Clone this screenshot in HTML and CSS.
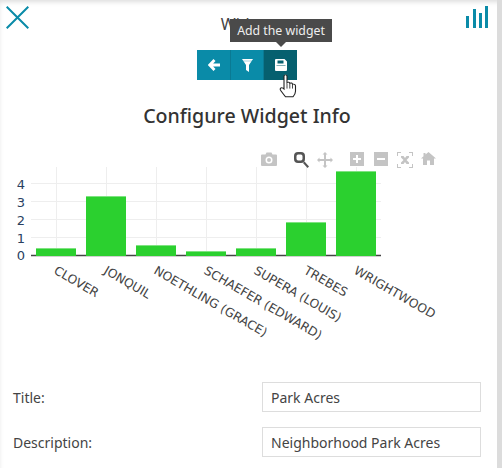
FILE: index.html
```html
<!DOCTYPE html>
<html lang="en">
<head>
  <meta charset="UTF-8">
  <title>Configure Widget</title>
  <link rel="stylesheet" href="styles.css">
</head>
<body>
  <div class="panel">
    <header class="top">
      <svg class="close-icon" width="23" height="23" viewBox="0 0 23 23"><path d="M.7 .7L22.300 22.300M22.300 .7L.7 22.300" stroke="#0a8ba8" stroke-width="2" fill="none"/></svg>
      <div class="widget-title">Widget</div>
      <svg class="bars-icon" width="22" height="22" viewBox="0 0 22 22">
        <rect x="0" y="10" width="3" height="12" fill="#0a8ba8"/>
        <rect x="7" y="3" width="3" height="19" fill="#0a8ba8"/>
        <rect x="13" y="7" width="3" height="15" fill="#0a8ba8"/>
        <rect x="19" y="0" width="3" height="22" fill="#0a8ba8"/>
      </svg>
    </header>

    <div class="btn-wrap">
      <div class="tooltip">Add the widget</div>
      <div class="btn-group">
        <button class="btn">
          <svg class="back-icon" width="12" height="12" viewBox="0 0 12 12"><path d="M6.500 1L1.800 6L6.500 11M2.500 6H12" stroke="#fff" stroke-width="2.800" fill="none"/></svg>
        </button>
        <button class="btn">
          <svg width="11" height="13" viewBox="0 0 11 13"><path d="M0 0H11L7 6V13L4 11V6Z" fill="#fff"/><path d="M1 2H10" stroke="#0a8ba8" stroke-width=".6" opacity=".6"/></svg>
        </button>
        <button class="btn btn-active">
          <svg width="12" height="12" viewBox="0 0 12 12"><path fill-rule="evenodd" d="M1 0H9.500L12 2.500V11A1 1 0 0 1 11 12H1A1 1 0 0 1 0 11V1A1 1 0 0 1 1 0ZM2.500 1.500V4.500H8.500V1.500ZM1.500 6V6.500H10.500V6Z" fill="#fff"/></svg>
        </button>
      </div>
      <svg class="hand" width="18" height="24" viewBox="0 0 18 28" preserveAspectRatio="none">
        <path d="M5 2.500C5 .5 8 .5 8 2.500V10C9 9 10.500 9.500 10.800 10.800C12 10 13.300 10.500 13.500 12C14.800 11.500 16.500 12.200 16.500 14V20C16.500 23 15 25 14 26.500H6.500C5 24 3.500 22.500 1.500 19C.5 17 2 15 4 16.500L5 17.500Z" fill="#fff" stroke="#222" stroke-width="1.100"/>
        <path d="M8 11V17M10.800 11V17M13.500 12V17" stroke="#222" stroke-width=".9"/>
      </svg>
    </div>

    <h2 class="heading">Configure Widget Info</h2>

    <div class="chart">
      <svg class="plot" width="497" height="212" viewBox="0 0 497 212">
        <g class="grid">
          <path d="M56.500 12V100M106.500 12V100M156.500 12V100M206.500 12V100M256.500 12V100M306.500 12V100M356.500 12V100"/>
          <path d="M31 28.500H381M31 46.500H381M31 64.500H381M31 82.500H381"/>
        </g>
        <path d="M31 100.500H381" stroke="#444" stroke-width="1.500"/>
        <g class="bars">
          <rect x="36" y="93" width="40" height="8"/>
          <rect x="86" y="41" width="40" height="60"/>
          <rect x="136" y="90" width="40" height="11"/>
          <rect x="186" y="96" width="40" height="5"/>
          <rect x="236" y="93" width="40" height="8"/>
          <rect x="286" y="67" width="40" height="34"/>
          <rect x="336" y="16" width="40" height="85"/>
        </g>
        <g class="bar-tops">
          <rect x="36" y="93" width="40" height="1"/>
          <rect x="86" y="41" width="40" height="1"/>
          <rect x="136" y="90" width="40" height="1"/>
          <rect x="186" y="96" width="40" height="1"/>
          <rect x="236" y="93" width="40" height="1"/>
          <rect x="286" y="67" width="40" height="1"/>
          <rect x="336" y="16" width="40" height="1"/>
        </g>
        <g class="y-ticks">
          <text x="25" y="34">4</text>
          <text x="25" y="52">3</text>
          <text x="25" y="70">2</text>
          <text x="25" y="88">1</text>
          <text x="25" y="105">0</text>
        </g>
        <g class="x-ticks">
          <text transform="translate(53 118) rotate(30)">CLOVER</text>
          <text transform="translate(103 118) rotate(30)">JONQUIL</text>
          <text transform="translate(153 118) rotate(30)">NOETHLING (GRACE)</text>
          <text transform="translate(203 118) rotate(30)">SCHAEFER (EDWARD)</text>
          <text transform="translate(253 118) rotate(30)">SUPERA (LOUIS)</text>
          <text transform="translate(303 118) rotate(30)">TREBES</text>
          <text transform="translate(353 118) rotate(30)">WRIGHTWOOD</text>
        </g>
      </svg>
      <div class="modebar">
        <svg class="mode-icon" style="left:261px" width="16" height="14" viewBox="0 0 16 14"><path fill-rule="evenodd" d="M1 2.500H4.500L5.500 .5H10.500L11.500 2.500H15A1 1 0 0 1 16 3.500V13A1 1 0 0 1 15 14H1A1 1 0 0 1 0 13V3.500A1 1 0 0 1 1 2.500ZM8 4.500A3.500 3.500 0 1 0 8 11.500A3.500 3.500 0 1 0 8 4.500Z"/><circle cx="8" cy="8" r="2"/></svg>
        <svg class="mode-icon mode-on" style="left:293px" width="16" height="16" viewBox="0 0 16 16"><path fill-rule="evenodd" d="M5 0H8A4 4 0 0 1 12 4V7A4 4 0 0 1 8 11H5A4 4 0 0 1 1 7V4A4 4 0 0 1 5 0ZM5 2.500A2 2 0 0 0 3.500 4V7A2 2 0 0 0 5 8.500H8A2 2 0 0 0 9.500 7V4A2 2 0 0 0 8 2.500Z"/><path d="M10 11L11.500 9.500L16 14.500L14.500 16Z"/></svg>
        <svg class="mode-icon" style="left:317px" width="16" height="16" viewBox="0 0 16 16"><path d="M8 0L10.500 2.500H9V7H13.500V5.500L16 8L13.500 10.500V9H9V13.500H10.500L8 16L5.500 13.500H7V9H2.500V10.500L0 8L2.500 5.500V7H7V2.500H5.500Z"/></svg>
        <svg class="mode-icon" style="left:350px" width="14" height="14" viewBox="0 0 14 14"><path fill-rule="evenodd" d="M0 0H14V14H0ZM6 3V6H3V8H6V11H8V8H11V6H8V3Z"/></svg>
        <svg class="mode-icon" style="left:374px" width="14" height="14" viewBox="0 0 14 14"><path fill-rule="evenodd" d="M0 0H14V14H0ZM3 6V8H11V6Z"/></svg>
        <svg class="mode-icon" style="left:397px" width="16" height="16" viewBox="0 0 16 16"><path d="M0 4V0H4V1H1V4ZM12 0H16V4H15V1H12ZM16 12V16H12V15H15V12ZM4 16H0V12H1V15H4ZM4 4H6.500L8 6L9.500 4H12V5.500L9.500 8L12 10.500V12H9.500L8 10L6.500 12H4V10.500L6.500 8L4 5.500Z"/></svg>
        <svg class="mode-icon" style="left:421px" width="15" height="13" viewBox="0 0 15 13"><path d="M7.500 0L15 6.500H13V13H9V8.500H6V13H2V6.500H0L2.500 4.300V1H4.500V2.600Z"/></svg>
      </div>
    </div>

    <form class="fields">
      <div class="field-row">
        <label for="title">Title:</label>
        <input id="title" type="text" value="Park Acres">
      </div>
      <div class="field-row">
        <label for="description">Description:</label>
        <input id="description" type="text" value="Neighborhood Park Acres">
      </div>
    </form>
  </div>
  <div class="scrollbar"></div>
</body>
</html>
```

FILE: styles.css
```css
html, body {
  margin: 0;
  height: 468px;
  overflow: hidden;
}
body {
  display: flex;
  font-family: "Noto Sans", "Open Sans", sans-serif;
  color: #444;
  background: #fff;
}
.panel {
  width: 497px;
  height: 468px;
  box-sizing: border-box;
  box-shadow: inset 2px 5px 5px -3px #ddd;
}
.scrollbar {
  width: 5px;
  background: #dcdcdc;
}
.top {
  height: 50px;
  box-sizing: border-box;
  padding: 6px 5px 0 6px;
  display: flex;
  justify-content: space-between;
  align-items: flex-start;
}
.widget-title {
  font-size: 16px;
  line-height: 22px;
  margin-top: 7px;
}
.bars-icon {
  margin-right: 4px;
}
.btn-wrap {
  position: relative;
  width: 100px;
  margin-left: 197px;
}
.btn-group {
  display: flex;
  height: 30px;
}
.btn {
  flex: 1;
  padding: 0;
  border: none;
  border-right: 1px solid #0a7a93;
  background: #0a8ba8;
  display: flex;
  align-items: center;
  justify-content: center;
}
.btn-active {
  background: #06606f;
  border-right: none;
}
.back-icon {
  margin-left: 2px;
}
.tooltip {
  position: absolute;
  left: 33px;
  top: -31px;
  width: 102px;
  height: 23px;
  line-height: 23px;
  text-align: center;
  font-size: 12.300px;
  color: #eee;
  background: #4a4a4a;
  white-space: nowrap;
}
.tooltip::after {
  content: "";
  position: absolute;
  left: 46px;
  top: 23px;
  border: 5px solid transparent;
  border-top-color: #4a4a4a;
}
.hand {
  position: absolute;
  left: 82px;
  top: 24px;
}
.heading {
  margin: 22px 0 0;
  text-align: center;
  font-size: 19.600px;
  line-height: 28px;
  font-weight: 500;
  color: #333;
  width: 494px;
}
.chart {
  position: relative;
  height: 212px;
  margin-top: 25px;
}
.plot {
  display: block;
}
.grid path {
  stroke: #eee;
  stroke-width: 1;
  fill: none;
}
.bars rect {
  fill: #2bd02f;
}
.bar-tops rect {
  fill: #7fe381;
}
.y-ticks text {
  font-family: "DejaVu Sans", sans-serif;
  font-size: 13px;
  fill: #2a3f5f;
  text-anchor: end;
}
.x-ticks text {
  font-family: "DejaVu Sans", sans-serif;
  font-size: 12.300px;
  fill: #444;
}
.modebar {
  position: absolute;
  left: 0;
  top: 0;
  width: 100%;
}
.mode-icon {
  position: absolute;
  top: -3px;
  fill: #c4c4c4;
}
.mode-on {
  fill: #555;
}
.fields {
  padding: 15px 16px 0 13px;
}
.field-row {
  display: flex;
  justify-content: space-between;
  align-items: center;
  height: 30px;
  margin-bottom: 15px;
}
.field-row label {
  font-size: 14px;
}
.field-row input {
  width: 219px;
  height: 30px;
  box-sizing: border-box;
  padding: 0 8px;
  border: 1px solid #ddd;
  outline: none;
  font-family: inherit;
  font-size: 14px;
  color: #444;
}
```
